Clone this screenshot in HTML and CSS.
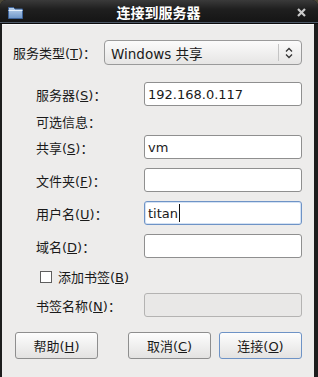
FILE: index.html
```html
<!DOCTYPE html>
<html lang="zh-CN">
<head>
  <meta charset="UTF-8">
  <title>连接到服务器</title>
  <link rel="stylesheet" href="styles.css">
</head>
<body>
  <div class="window">
    <!-- Title bar -->
    <div class="titlebar">
      <svg class="folder-icon" width="17" height="15" viewBox="0 0 17 15">
        <defs>
          <linearGradient id="fold" x1="0" y1="0" x2="0" y2="1">
            <stop offset="0" stop-color="#bcd3ee"/>
            <stop offset="1" stop-color="#6d95c8"/>
          </linearGradient>
        </defs>
        <path d="M1.5 2.5 h5 l1.5 1.5 h7.5 v9.5 h-14 z" fill="url(#fold)" stroke="#3d6298" stroke-width="1"/>
        <path d="M1.5 5.5 h14" stroke="#e3eefa" stroke-width="1"/>
      </svg>
      <span class="title">连接到服务器</span>
      <svg class="close-icon" width="9" height="9" viewBox="0 0 9 9">
        <path d="M1 1 L8 8 M8 1 L1 8" stroke="#c9c9c9" stroke-width="2.2"/>
      </svg>
    </div>

    <!-- Dialog body -->
    <div class="dialog">
      <div class="type-row">
        <span class="label">服务类型(<u>T</u>)：</span>
        <div class="combo">
          <span class="combo-text">Windows 共享</span>
          <span class="combo-sep"></span>
          <svg class="combo-arrows" width="8" height="12" viewBox="0 0 8 12">
            <path d="M1 4.5 L4 1.5 L7 4.5 M1 7.5 L4 10.5 L7 7.5" fill="none" stroke="#333" stroke-width="1.3"/>
          </svg>
        </div>
      </div>

      <div class="fields">
        <div class="row">
          <span class="label">服务器(<u>S</u>)：</span>
          <div class="entry">192.168.0.117</div>
        </div>
        <div class="row info">
          <span class="label">可选信息：</span>
        </div>
        <div class="row">
          <span class="label">共享(<u>S</u>)：</span>
          <div class="entry">vm</div>
        </div>
        <div class="row">
          <span class="label">文件夹(<u>F</u>)：</span>
          <div class="entry"></div>
        </div>
        <div class="row">
          <span class="label">用户名(<u>U</u>)：</span>
          <div class="entry focused">titan<span class="caret"></span></div>
        </div>
        <div class="row">
          <span class="label">域名(<u>D</u>)：</span>
          <div class="entry"></div>
        </div>
        <div class="row check-row">
          <span class="checkbox"></span>
          <span class="label">添加书签(<u>B</u>)</span>
        </div>
        <div class="row">
          <span class="label">书签名称(<u>N</u>)：</span>
          <div class="entry disabled"></div>
        </div>
      </div>

      <div class="buttons">
        <button class="btn">帮助(<u>H</u>)</button>
        <span class="spacer"></span>
        <button class="btn">取消(<u>C</u>)</button>
        <button class="btn default">连接(<u>O</u>)</button>
      </div>
    </div>
  </div>
</body>
</html>
```

FILE: styles.css
```css
/* Base */
* { box-sizing: border-box; }
body {
  margin: 0;
  background: #4a4636;
  font-family: "DejaVu Sans", "Noto Sans CJK SC", sans-serif;
  font-size: 13px;
  color: #1a1a1a;
}
u { text-decoration: underline; text-underline-offset: 1px; }

/* Window frame */
.window {
  width: 318px;
  height: 377px;
  background: #1d1d1d;
  border-radius: 6px 6px 0 0;
  padding: 0 4px 0 2px;
  display: flex;
  flex-direction: column;
  overflow: hidden;
}

/* Title bar */
.titlebar {
  height: 24px;
  flex: none;
  display: flex;
  align-items: center;
  margin: 0 -4px 0 -2px;
  padding: 0 12px 0 7px;
  background: linear-gradient(#3a3a3a, #1f1f1f 40%, #141414);
  border-bottom: 1px solid #0a0a0a;
  box-shadow: inset 0 -3px 0 -2px #4d5866;
  border-radius: 6px 6px 0 0;
}
.folder-icon { flex: none; margin-top: 1px; }
.title {
  flex: 1;
  text-align: center;
  color: #fff;
  font-weight: bold;
  font-size: 14px;
  font-family: "Noto Sans CJK SC", sans-serif;
  padding-right: 4px;
}
.close-icon { flex: none; margin-top: 2px; }

/* Dialog body */
.dialog {
  flex: 1;
  background: #edeceb;
  border-top: 1px solid #fafafa;
  padding: 15px 12px 0 11px;
}
.label { white-space: nowrap; }

/* Service type row */
.type-row {
  display: flex;
  align-items: center;
  height: 25px;
}
.type-row .label { width: 91px; }
.combo {
  flex: 1;
  height: 25px;
  display: flex;
  align-items: center;
  border: 1px solid #9a9a9a;
  border-radius: 4px;
  background: linear-gradient(#fbfbfb, #e6e5e4);
  padding: 0 8px 0 6px;
}
.combo-text { flex: 1; font-size: 13.5px; }
.combo-sep {
  width: 1px;
  height: 17px;
  background: #c4c4c4;
  margin-right: 6px;
}

/* Field grid */
.fields {
  margin: 17px 0 0 23px;
  display: flex;
  flex-direction: column;
  gap: 9px;
}
.row {
  display: flex;
  align-items: center;
  height: 24px;
}
.row .label { width: 108px; }
.row.info { height: 20px; margin: -4px 0 -5px; }
.entry {
  flex: 1;
  height: 24px;
  background: #fff;
  border: 1px solid #8f8f8f;
  border-radius: 3px;
  padding: 0 3px;
  font-size: 13px;
  display: flex;
  align-items: center;
}
.entry.focused {
  border-color: #6e93c6;
  box-shadow: inset 0 0 0 1px #d4e2f4;
}
.caret {
  width: 1px;
  height: 18px;
  background: #111;
  margin-left: 1px;
}
.entry.disabled {
  background: #e9e8e7;
  border-color: #b4b3b2;
}
.check-row { height: 19px; margin-bottom: -2px; }
.checkbox {
  width: 12px;
  height: 12px;
  border: 1px solid #5e5e5e;
  background: #fff;
  margin: 0 6px 0 4px;
  flex: none;
}
.check-row .label { width: auto; }

/* Buttons */
.buttons {
  display: flex;
  gap: 8px;
  margin: 15px 0 0 2px;
}
.spacer { flex: 1; }
.btn {
  width: 83px;
  height: 27px;
  font-family: "DejaVu Sans", "Noto Sans CJK SC", sans-serif;
  font-size: 13px;
  color: #1a1a1a;
  background: linear-gradient(#fdfdfd, #e3e2e1);
  border: 1px solid #8e8e8e;
  border-radius: 3px;
  padding: 0;
}
.btn.default { border-color: #6e93c6; }
```
